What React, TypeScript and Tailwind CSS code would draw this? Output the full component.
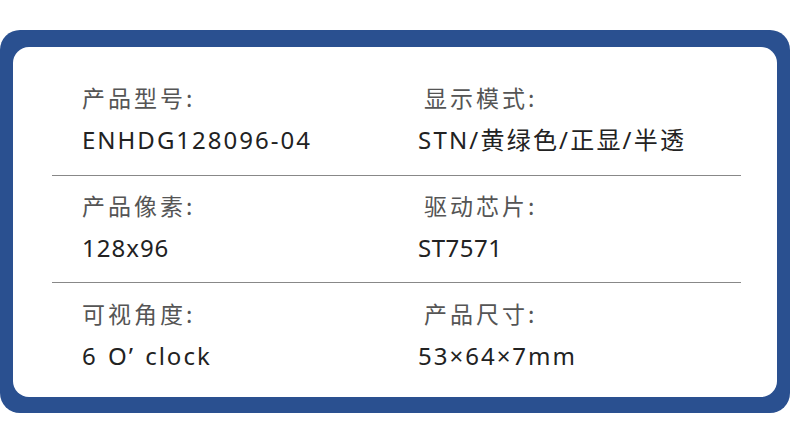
import React from 'react';

type Spec = { label: string; value: string; track: string };

const specs: Spec[][] = [
  [
    { label: '产品型号:', value: 'ENHDG128096-04', track: 'tracking-[2px]' },
    { label: '显示模式:', value: 'STN/黄绿色/正显/半透', track: 'tracking-[2.2px]' },
  ],
  [
    { label: '产品像素:', value: '128x96', track: 'tracking-[1px]' },
    { label: '驱动芯片:', value: 'ST7571', track: 'tracking-[0.5px]' },
  ],
  [
    { label: '可视角度:', value: '6 O’ clock', track: 'tracking-[2px] [word-spacing:2px]' },
    { label: '产品尺寸:', value: '53×64×7mm', track: 'tracking-[2px]' },
  ],
];

const rowClass = [
  'h-[129px] pt-[38px] border-b border-[#888888]',
  'h-[107px] pt-[17px] border-b border-[#888888]',
  'pt-[18px]',
];

export default function App() {
  return (
    <div
      className="w-[790px] h-[447px] bg-white pt-[30px]"
      style={{ fontFamily: '"Noto Sans", "Noto Sans CJK SC", sans-serif' }}
    >
      <div className="h-[383px] bg-[#2a5090] rounded-[20px] pt-[17px] pb-[16px] px-[13px]">
        <div className="h-full bg-white rounded-[16px] pl-[39px] pr-[36px]">
          {specs.map((row, i) => (
            <div key={i} className={`grid grid-cols-[366px_1fr] ${rowClass[i]}`}>
              {row.map((s, j) => (
                <div key={j} className={j === 0 ? 'pl-[30px]' : ''}>
                  <div
                    className={`text-[23px] leading-[24px] text-[#555555] tracking-[3px] ${j === 1 ? 'pl-[6px]' : ''}`}
                    style={{ fontFamily: '"Noto Sans CJK SC", sans-serif' }}
                  >
                    {s.label}
                  </div>
                  <div className={`mt-[18px] text-[24px] leading-[26px] text-[#222222] ${s.track}`}>
                    {s.value}
                  </div>
                </div>
              ))}
            </div>
          ))}
        </div>
      </div>
    </div>
  );
}
